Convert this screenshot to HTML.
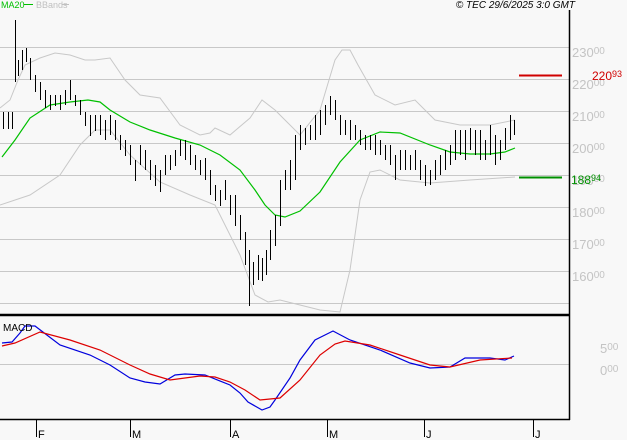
<!DOCTYPE html>
<html><head><style>
html,body{margin:0;padding:0;background:#f8f8f8;width:627px;height:440px;overflow:hidden}
svg{display:block}
text{font-family:"Liberation Sans",sans-serif}
</style></head><body>
<svg width="627" height="440" viewBox="0 0 627 440" xmlns="http://www.w3.org/2000/svg">
<rect width="627" height="440" fill="#f8f8f8"/>
<g stroke="#c8c8c8" stroke-width="1" shape-rendering="crispEdges">
<line x1="0" y1="47.5" x2="569" y2="47.5"/><line x1="0" y1="79.5" x2="569" y2="79.5"/>
<line x1="0" y1="111.5" x2="569" y2="111.5"/><line x1="0" y1="143.5" x2="569" y2="143.5"/>
<line x1="0" y1="175.5" x2="569" y2="175.5"/><line x1="0" y1="207.5" x2="569" y2="207.5"/>
<line x1="0" y1="239.5" x2="569" y2="239.5"/><line x1="0" y1="271.5" x2="569" y2="271.5"/>
<line x1="0" y1="303.5" x2="569" y2="303.5"/>
<line x1="0" y1="364.5" x2="569" y2="364.5"/>
</g>
<g fill="#c4c4c4" font-size="13">
<text x="572" y="57">230<tspan font-size="10" dy="-3">00</tspan></text>
<text x="572" y="89">220<tspan font-size="10" dy="-3">00</tspan></text>
<text x="572" y="121">210<tspan font-size="10" dy="-3">00</tspan></text>
<text x="572" y="153">200<tspan font-size="10" dy="-3">00</tspan></text>
<text x="572" y="185">190<tspan font-size="10" dy="-3">00</tspan></text>
<text x="572" y="217">180<tspan font-size="10" dy="-3">00</tspan></text>
<text x="572" y="249">170<tspan font-size="10" dy="-3">00</tspan></text>
<text x="572" y="281">160<tspan font-size="10" dy="-3">00</tspan></text>
<text x="600" y="353">5<tspan font-size="10" dy="-3">00</tspan></text>
<text x="600" y="375">0<tspan font-size="10" dy="-3">00</tspan></text>
</g>
<polyline fill="none" stroke="#c8c8c8" stroke-width="1" points="0,108 10,100 18,80 25,65 40,58 55,53 70,55 85,60 95,60 110,58 125,80 140,95 160,98 180,125 200,135 210,133 215,128 230,135 250,118 262,100 275,110 300,135 320,110 335,60 342,50 350,50 358,65 375,95 395,105 415,100 435,120 460,125 490,125 515,120"/>
<polyline fill="none" stroke="#c8c8c8" stroke-width="1" points="0,205 30,195 60,175 80,145 95,130 110,130 130,155 160,182 190,195 215,205 240,255 255,295 268,302 280,300 300,305 320,310 340,312 350,270 360,200 370,172 380,170 400,180 430,183 470,180 515,177"/>
<polyline fill="none" stroke="#00c000" stroke-width="1.2" points="2,157 15,140 30,118 50,105 70,102 88,100 100,102 110,110 130,122 150,130 175,138 200,145 220,155 240,170 255,190 265,205 275,215 285,217 300,211 320,192 340,162 360,140 380,132 400,133 430,145 450,152 470,154 490,154 505,152 515,148"/>
<path fill="none" stroke="#000" stroke-width="1" shape-rendering="crispEdges" transform="translate(0.5,0)" d="
M3,112V129 M8,112V129 M12,112V129
M15,20V82 M18,60V76 M22,50V70 M26,48V62 M30,58V80
M35,75V92 M40,82V100 M45,90V108 M50,95V110 M55,95V106 M60,95V110 M65,90V105 M70,80V100 M75,95V106
M80,100V115 M85,112V126 M90,115V136 M95,115V131 M100,115V135 M105,120V140 M110,115V135 M115,120V140
M120,135V150 M125,140V156 M130,145V165 M135,160V181 M140,145V165 M145,150V170 M150,160V180 M155,165V186 M160,170V192 M165,155V175 M170,155V170 M175,150V166 M180,140V156 M185,140V160 M190,145V165 M195,155V170 M200,160V175
M205,158V180 M210,170V195 M215,185V201 M220,190V206 M225,180V200 M230,195V215 M235,195V226 M240,215V240 M245,232V265 M249,250V306 M253,262V285 M258,255V280 M262,258V281 M266,250V275 M270,230V260 M275,215V246 M280,180V226 M285,170V190 M290,160V190 M295,135V180 M300,125V150 M305,128V145 M310,125V140 M315,115V140 M320,110V135 M325,105V125 M330,96V115 M335,100V120 M340,115V135 M345,120V135 M350,120V140 M355,125V140 M360,130V145 M365,135V150 M370,135V150 M375,135V155 M380,140V155 M385,145V160 M390,145V165 M395,155V180 M400,150V170 M405,150V170 M410,155V170 M415,150V170 M420,160V180 M425,165V186 M430,170V185 M435,160V180 M440,155V175 M445,150V170 M450,145V165 M455,130V160 M460,130V155 M465,130V160 M470,128V150 M475,130V155 M480,130V160 M485,140V160 M490,125V155 M495,135V165 M500,140V160 M505,128V150 M510,115V140 M514,120V135"/>
<polyline fill="none" stroke="#0000dd" stroke-width="1.2" points="2,343 12,342 20,333 25,326 35,326 60,345 90,355 110,365 130,378 145,382 160,384 175,375 185,374 205,375 230,385 240,393 248,402 262,410 270,407 275,400 290,378 300,360 315,340 333,331 350,340 380,350 410,363 430,368 450,367 465,358 490,358 505,360 514,356"/>
<polyline fill="none" stroke="#dd0000" stroke-width="1.2" points="2,346 15,343 40,332 70,340 100,350 130,365 150,374 170,380 200,376 215,377 230,382 245,390 260,400 280,398 300,380 320,355 335,344 345,341 370,345 400,355 430,365 450,367 480,360 512,358"/>
<text x="3" y="331" font-size="10" fill="#000">MACD</text>
<line x1="569.5" y1="10" x2="569.5" y2="420" stroke="#000" stroke-width="1.5"/>
<line x1="0" y1="315" x2="570" y2="315" stroke="#000" stroke-width="2.5"/>
<line x1="0" y1="419.5" x2="570" y2="419.5" stroke="#000" stroke-width="1.5"/>
<g stroke="#000" stroke-width="1"><line x1="36.5" y1="420" x2="36.5" y2="437"/><line x1="130.5" y1="420" x2="130.5" y2="437"/><line x1="230.5" y1="420" x2="230.5" y2="437"/><line x1="327.5" y1="420" x2="327.5" y2="437"/><line x1="424.5" y1="420" x2="424.5" y2="437"/><line x1="533.5" y1="420" x2="533.5" y2="437"/></g>
<g font-size="11" fill="#000"><text x="38" y="438">F</text><text x="132" y="438">M</text><text x="232" y="438">A</text><text x="329" y="438">M</text><text x="426" y="438">J</text><text x="535" y="438">J</text></g>
<line x1="519" y1="75.5" x2="562" y2="75.5" stroke="#d00000" stroke-width="2"/>
<text x="592" y="80" font-size="12" fill="#d00000">220<tspan font-size="9" dy="-3">93</tspan></text>
<line x1="519" y1="177.5" x2="562" y2="177.5" stroke="#009000" stroke-width="2"/>
<text x="571" y="184" font-size="12" fill="#009000">188<tspan font-size="9" dy="-3">94</tspan></text>
<text x="1" y="8" font-size="9" fill="#00c000">MA20</text><line x1="24" y1="4.5" x2="33" y2="4.5" stroke="#00c000"/>
<text x="36" y="8" font-size="9" fill="#c0c0c0">BBands</text><line x1="62" y1="4.5" x2="69" y2="4.5" stroke="#c0c0c0"/>
<text x="575" y="8" font-size="10" font-style="italic" fill="#000" text-anchor="end">© TEC 29/6/2025 3:0 GMT</text>
</svg>
</body></html>
